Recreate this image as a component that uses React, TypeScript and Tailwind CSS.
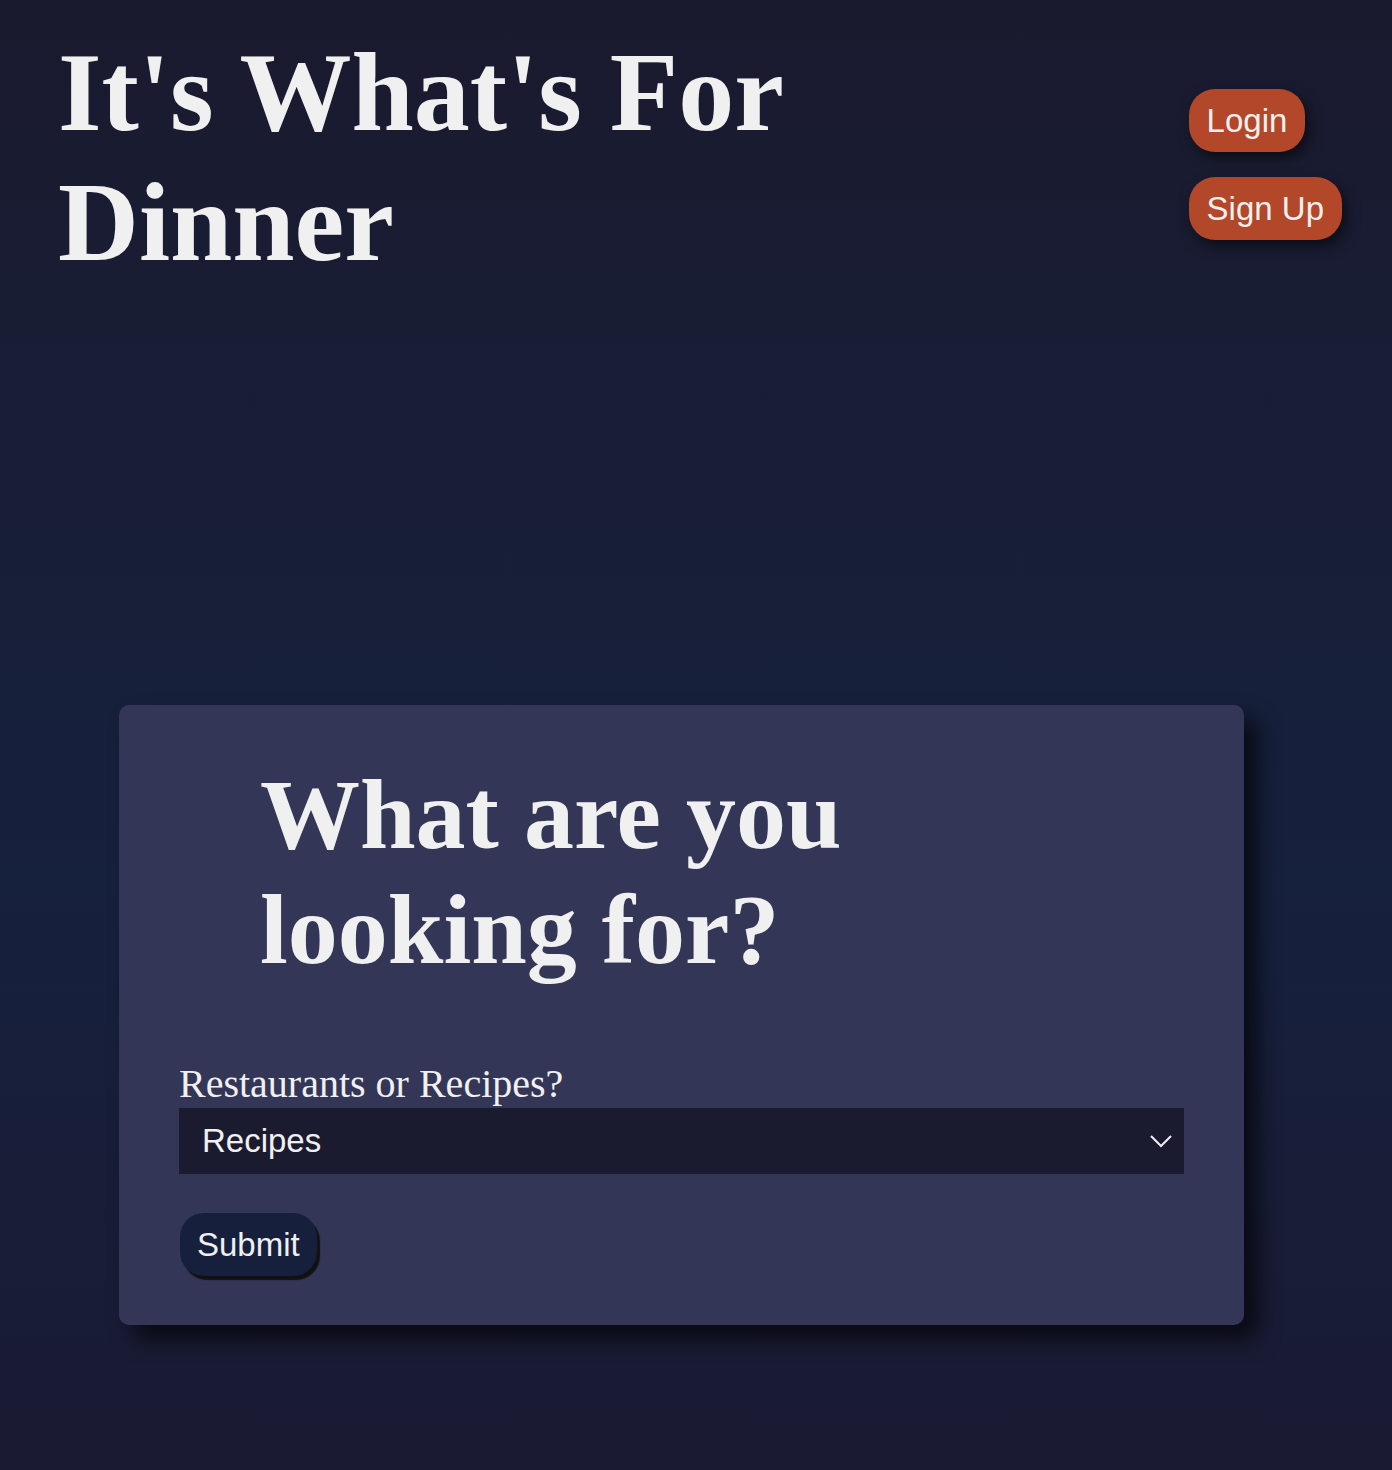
import React, {useState} from "react";

const serif = "font-['Liberation_Serif','Times_New_Roman',serif]";
const sans = "font-['Liberation_Sans',Arial,sans-serif]";

function PillButton({label}: {label: string}) {
    return (
        <button
            className={`${sans} h-[63px] px-[18px] rounded-[26px] bg-[#b3472a] text-[33px] leading-none text-[#f0f0f0] shadow-[4px_6px_14px_rgba(0,0,0,0.55)]`}>
            {label}
        </button>
    );
}

export default function App() {
    const [choice, setChoice] = useState("Recipes");

    return (
        <div className="min-h-[1470px] w-full bg-[linear-gradient(180deg,#1a1a2e_0%,#16213e_60%,#1a1a32_100%)] text-[#f0f0f0]">
            <header className="flex justify-between pl-[58px] pr-[50px]">
                <h1 className={`${serif} font-bold text-[112px] leading-[130px] pt-[27px] w-[800px]`}>
                    It's What's For Dinner
                </h1>
                <div className="flex flex-col items-start gap-[25px] pt-[89px]">
                    <PillButton label="Login"/>
                    <PillButton label="Sign Up"/>
                </div>
            </header>

            <div
                className="ml-[119px] mt-[418px] w-[1125px] h-[620px] rounded-[10px] bg-[#333656] shadow-[14px_14px_22px_rgba(0,0,0,0.65)] px-[60px] pt-[52px]">
                <h2 className={`${serif} font-bold text-[100px] leading-[115px] pl-[81px] w-[760px]`}>
                    What are you looking for?
                </h2>
                <form className="mt-[75px] flex flex-col" onSubmit={e => e.preventDefault()}>
                    <label htmlFor="kind" className={`${serif} text-[40px] leading-[44px]`}>
                        Restaurants or Recipes?
                    </label>
                    <div className="relative mt-[2px]">
                        <select
                            id="kind"
                            value={choice}
                            onChange={e => setChoice(e.target.value)}
                            className={`${sans} appearance-none w-full h-[66px] bg-[#1b1b2f] text-[33px] text-[#f0f0f0] pl-[23px] outline-none`}>
                            <option>Restaurants</option>
                            <option>Recipes</option>
                        </select>
                        <svg className="absolute right-[11px] top-[26px] pointer-events-none" width="24" height="14"
                             viewBox="0 0 24 14" fill="none">
                            <path d="M2 2l10 10L22 2" stroke="#f0f0f0" strokeWidth="2"/>
                        </svg>
                    </div>
                    <div className="mt-[39px] pl-[1px]">
                        <button type="submit"
                                className={`${sans} h-[63px] px-[17px] rounded-[24px] bg-[#16203d] text-[33px] leading-none text-[#f0f0f0] shadow-[3px_4px_1px_#111111]`}>
                            Submit
                        </button>
                    </div>
                </form>
            </div>
        </div>
    );
}
